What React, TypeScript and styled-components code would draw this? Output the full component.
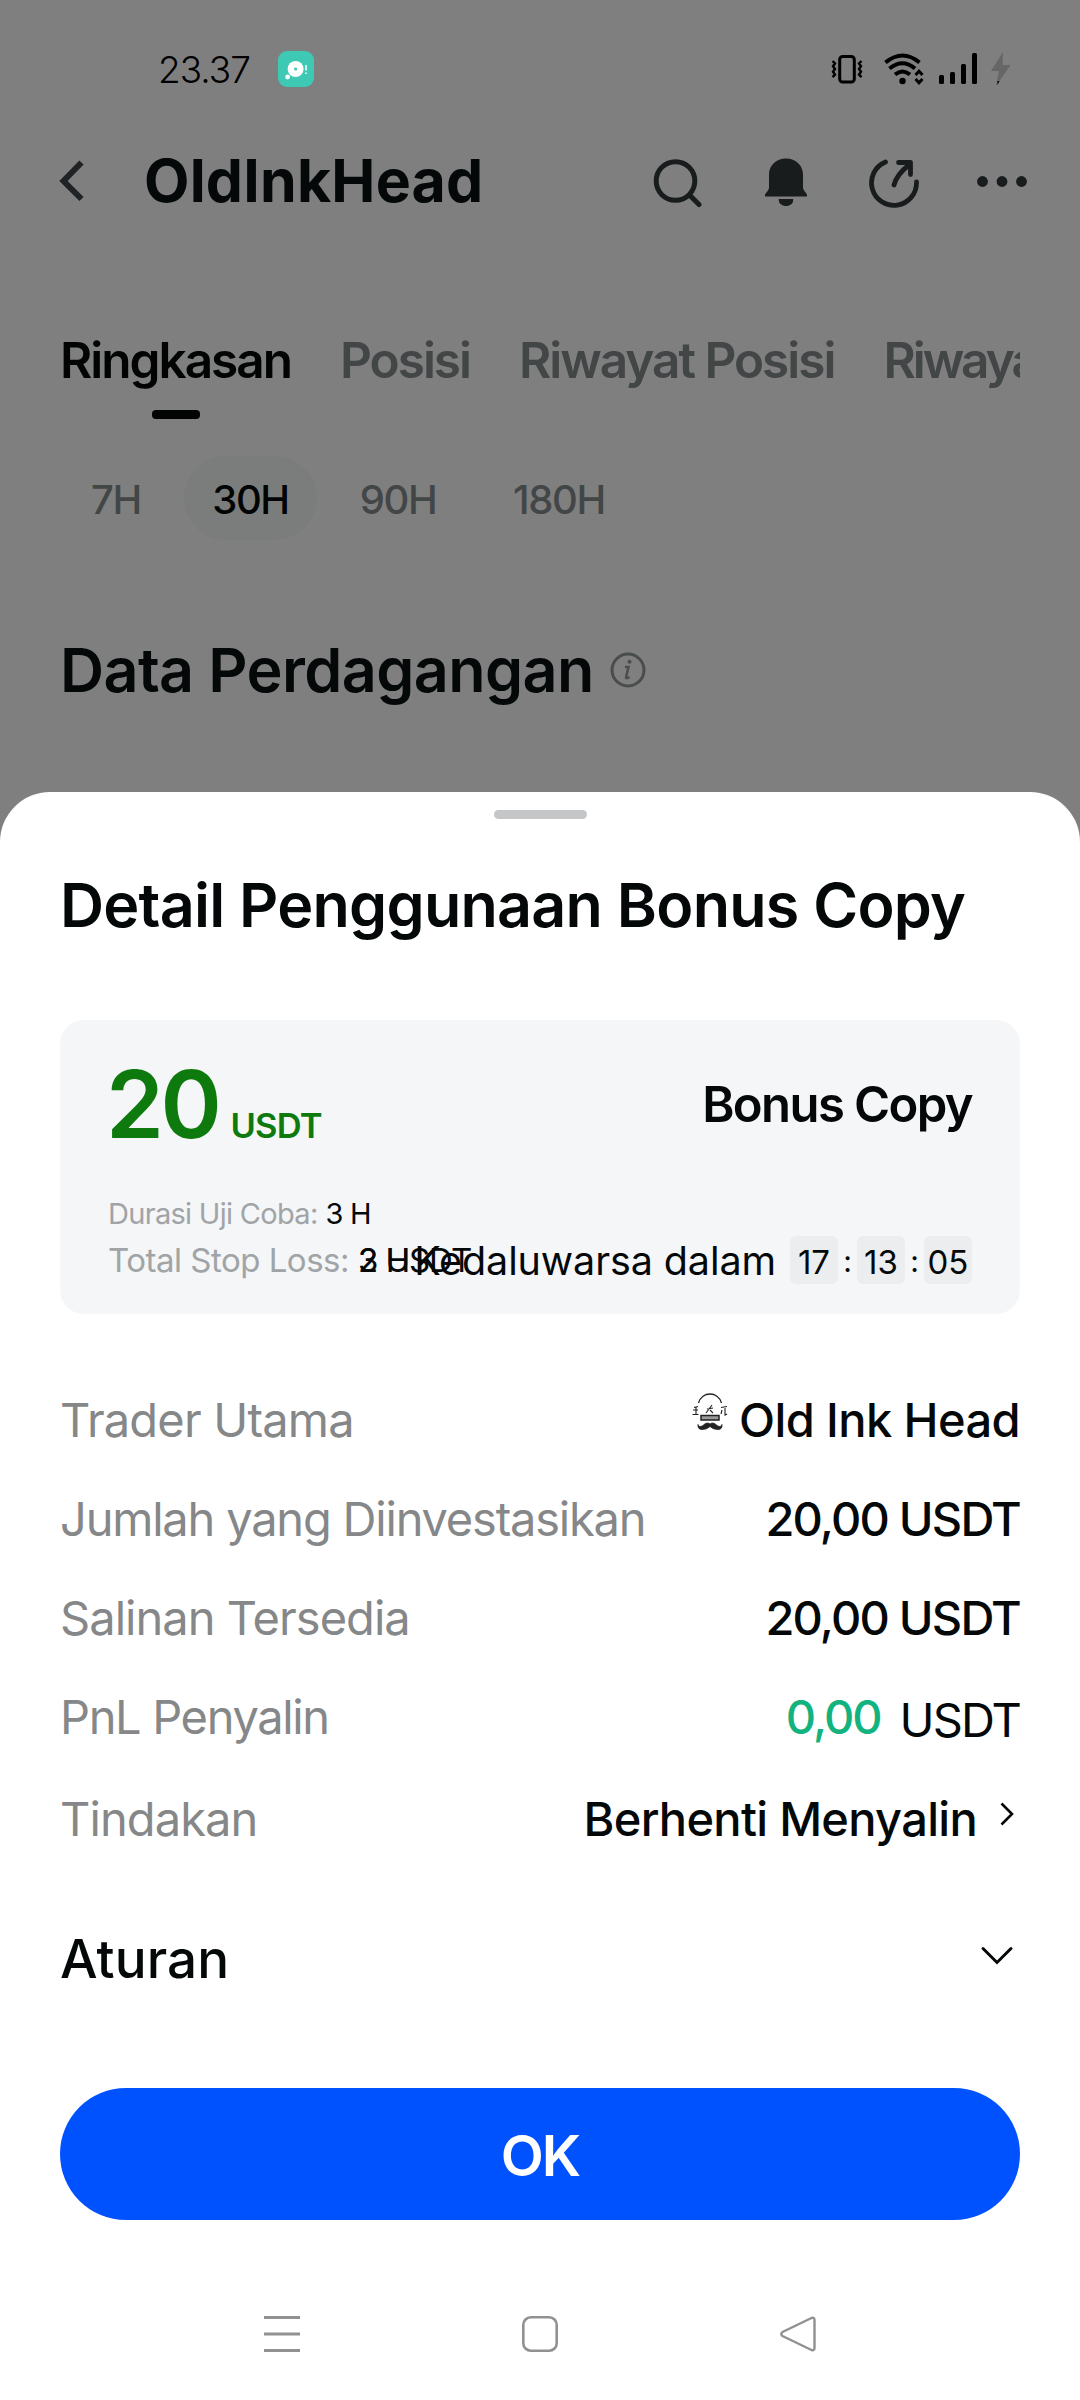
import React from "react";
import styled, { createGlobalStyle } from "styled-components";

const GlobalStyle = createGlobalStyle`
  * { box-sizing: border-box; }
  body { margin: 0; background: #7f7f7f; }
`;

const Screen = styled.main`
  width: 1080px;
  height: 2400px;
  display: flex;
  flex-direction: column;
  overflow: hidden;
  background: #7f7f7f;
  color: #050808;
  font-family: Inter, "Liberation Sans", sans-serif;
  white-space: nowrap;
`;

const Label = styled.span<{ $size: number; $weight?: number; $track?: number; $color?: string }>`
  font-size: ${(p) => p.$size}px;
  font-weight: ${(p) => p.$weight ?? 400};
  letter-spacing: ${(p) => p.$track ?? 0}px;
  color: ${(p) => p.$color ?? "inherit"};
`;

const StatusBar = styled.header`
  height: 138px;
  flex: none;
  display: flex;
  align-items: center;
  padding: 0 69px 0 158px;
  color: #000;
`;

const ChatBadge = styled.svg`
  margin-left: 28px;
`;

const StatusIcons = styled.div`
  margin-left: auto;
  display: flex;
  align-items: center;
`;

const StatusIcon = styled.svg<{ $before?: number }>`
  margin-left: ${(p) => p.$before ?? 0}px;
`;

const AppBar = styled.div`
  height: 86px;
  flex: none;
  display: flex;
  align-items: center;
  padding: 0 53px 0 58px;
`;

const AppTitle = styled.h1`
  margin: 0 0 0 60px;
  line-height: 80px;
  font-size: 59px;
  font-weight: 700;
  letter-spacing: 0.2px;
`;

const Actions = styled.div`
  margin-left: auto;
  display: flex;
  align-items: center;
  gap: 48px;
`;

const Divider = styled.div`
  flex: none;
  height: 1px;
  margin: 23px 90px 0;
  background: #7d7d7d;
`;

const Tabs = styled.nav`
  flex: none;
  display: flex;
  gap: 49px;
  margin: 82px 60px 0;
  overflow: hidden;
`;

const Tab = styled.div<{ $active?: boolean; $track?: number }>`
  flex: none;
  display: flex;
  flex-direction: column;
  align-items: center;
  height: 89px;
  line-height: 60px;
  font-size: 49.5px;
  font-weight: 600;
  letter-spacing: ${(p) => p.$track ?? -2}px;
  color: ${(p) => (p.$active ? "#020404" : "#434646")};
  &::after {
    content: "";
    display: ${(p) => (p.$active ? "block" : "none")};
    width: 48px;
    height: 9px;
    margin-top: 20px;
    border-radius: 4px;
    background: #020404;
  }
`;

const Periods = styled.div`
  flex: none;
  display: flex;
  margin: 37px 60px 0;
`;

const Period = styled.div<{ $w: number; $active?: boolean }>`
  width: ${(p) => p.$w}px;
  height: 84px;
  line-height: 87px;
  border-radius: 42px;
  text-align: center;
  font-size: 40px;
  font-weight: 500;
  letter-spacing: -1.4px;
  color: ${(p) => (p.$active ? "#020404" : "#434646")};
  background: ${(p) => (p.$active ? "#7a7d7c" : "transparent")};
  &:first-child {
    margin-right: 12px;
  }
`;

const SectionHeading = styled.div`
  flex: none;
  display: flex;
  align-items: center;
  gap: 16px;
  height: 80px;
  margin: 90px 60px 82px;
`;

const Heading = styled.h2<{ $track?: number }>`
  margin: 0;
  line-height: 80px;
  font-size: 61px;
  font-weight: 600;
  letter-spacing: ${(p) => p.$track ?? -0.7}px;
`;

const Sheet = styled.section`
  flex: 1;
  display: flex;
  flex-direction: column;
  padding: 18px 60px 0;
  border-radius: 50px 50px 0 0;
  background: #fff;
`;

const Grabber = styled.div`
  flex: none;
  align-self: center;
  width: 93px;
  height: 9px;
  margin-bottom: 46px;
  border-radius: 4.5px;
  background: #c4c6c7;
`;

const BonusCard = styled.div`
  position: relative;
  flex: none;
  height: 294px;
  margin-top: 75px;
  padding: 44px 48px 30px;
  border-radius: 24px;
  background: #f4f6f7;
`;

const CardTop = styled.div`
  display: flex;
  justify-content: space-between;
  height: 80px;
  margin-bottom: 48px;
  line-height: 80px;
`;

const CardName = styled.div`
  display: flex;
  padding-top: 1px;
`;

const Amount = styled.div`
  display: flex;
  align-items: baseline;
  gap: 12px;
  margin-left: -2px;
  color: #0e7a0e;
`;

const Detail = styled.div<{ $h: number; $gap: number }>`
  display: flex;
  gap: ${(p) => p.$gap}px;
  height: ${(p) => p.$h}px;
  line-height: ${(p) => p.$h}px;
`;

const Stacked = styled.span`
  position: relative;
`;

const StackedOver = styled.span`
  position: absolute;
  left: 0;
  top: 0;
`;

const Countdown = styled.div`
  position: absolute;
  right: 48px;
  bottom: 30px;
  display: flex;
  height: 48px;
  line-height: 50px;
`;

const Timer = styled.span`
  display: flex;
  margin-left: 14px;
`;

const TimeBox = styled.span`
  width: 48px;
  height: 48px;
  line-height: 52px;
  border-radius: 6px;
  background: #ebedee;
  text-align: center;
  font-size: 33px;
`;

const Colon = styled.span`
  width: 19px;
  line-height: 50px;
  text-align: center;
  font-size: 30px;
`;

const Rows = styled.div`
  flex: none;
  padding-top: 56px;
`;

const Row = styled.div<{ $h?: number }>`
  display: flex;
  align-items: center;
  justify-content: space-between;
  height: ${(p) => p.$h ?? 99}px;
  line-height: 60px;
`;

const Value = styled.div`
  display: flex;
  align-items: center;
`;

const Lowered = styled.span`
  display: flex;
  padding-top: 6px;
  margin-left: 19px;
`;

const Avatar = styled.svg`
  margin: -16px 10px 0 0;
`;

const RowChevron = styled.svg`
  margin: -10px 5px 0 22px;
`;

const RulesChevron = styled.svg`
  margin: -8px 6px 0 0;
`;

const OkButton = styled.button`
  flex: none;
  height: 132px;
  margin-top: 43px;
  padding: 3px 0 0;
  border: 0;
  border-radius: 66px;
  background: #0052ff;
  color: #fff;
  font-family: inherit;
  font-size: 56px;
  font-weight: 600;
  letter-spacing: -2px;
`;

const NavBar = styled.footer`
  display: flex;
  align-items: center;
  justify-content: center;
  gap: 222px;
  height: 180px;
  padding-top: 47px;
`;

const GRAY = "#858788";
const INK = "#191c1d";

export default function App() {
  return (
    <>
      <GlobalStyle />
      <Screen>
        <StatusBar>
          <Label $size={37} $weight={300} $track={-1}>23.37</Label>
          <ChatBadge width="36" height="36" viewBox="0 0 36 36">
            <rect width="36" height="36" rx="9" fill="#3ec9b5" />
            <circle cx="17.6" cy="18" r="8" fill="#fff" />
            <circle cx="17.6" cy="18" r="1.6" fill="#3ec9b5" />
            <circle cx="9.6" cy="26" r="2.4" fill="#fff" />
            <path d="M28 14v5.5M28 21.6v1.4" stroke="#fff" strokeWidth="1.5" />
          </ChatBadge>
          <StatusIcons>
            <StatusIcon width="32" height="32" viewBox="0 0 32 32" fill="none" stroke="#000">
              <rect x="8.7" y="3.4" width="14.6" height="25.6" rx="3" strokeWidth="3" />
              <path d="M1.5 8l2.5 2.4-2 2.8 2 2.8-2 2.8 2 2.8-2.5 2.6M30.5 8L28 10.4l2 2.8-2 2.8 2 2.8-2 2.8 2.5 2.6" strokeWidth="2.4" />
            </StatusIcon>
            <StatusIcon $before={20} width="42" height="34" viewBox="0 0 42 34" fill="none" stroke="#000" strokeWidth="4">
              <path d="M2.5 10.5Q19.5 -3.5 36.5 10.5M6.5 16.5Q19.5 6 32 16.5M12 22.5Q19.5 16.5 27 22.5" />
              <circle cx="19.5" cy="29" r="3.2" fill="#000" stroke="none" />
              <path d="M32.5 23l3.5-3.7 3.5 3.7M32.5 27l3.5 3.7 3.5-3.7" strokeWidth="3" />
            </StatusIcon>
            <StatusIcon $before={14} width="38" height="32" viewBox="0 0 38 32">
              <rect x="0" y="22" width="5" height="9" rx="1.5" />
              <rect x="11" y="19" width="5" height="12" rx="1.5" />
              <rect x="22" y="11" width="5" height="20" rx="1.5" />
              <rect x="33" y="0" width="5" height="31" rx="1.5" />
            </StatusIcon>
            <StatusIcon $before={14} width="20" height="36" viewBox="0 0 20 36">
              <path d="M12 1L0 20h8L5 35 19.5 14H11.5z" fill="#666" />
              <path d="M6.5 30H8.5L6.500 34z" fill="#000" />
            </StatusIcon>
          </StatusIcons>
        </StatusBar>
        <AppBar>
          <svg width="26" height="42" viewBox="0 0 26 42" fill="none" stroke="#202326" strokeWidth="6">
            <path d="M23.5 2.5L5.5 21l18 18" />
          </svg>
          <AppTitle>OldInkHead</AppTitle>
          <Actions>
            <svg width="56" height="54" viewBox="0 0 56 54" fill="none" stroke={INK} strokeWidth="5" strokeLinecap="round">
              <circle cx="23.5" cy="27" r="19.3" />
              <path d="M38 41.5l9 9" />
            </svg>
            <svg width="60" height="50" viewBox="0 0 60 50" fill={INK}>
              <path d="M30 2.5c10 0 17 7 17 16v13c0 3 4 6 4 7.5v1.500H9V39c0-1.500 4-4.500 4-7.500v-13c0-9 7-16 17-16z" />
              <path d="M22.8 43h14.4v1c0 3.500-3 6-7.200 6s-7.200-2.500-7.200-6z" />
            </svg>
            <svg width="60" height="54" viewBox="0 0 60 54" fill="none" stroke={INK} strokeWidth="4.8" strokeLinecap="round" strokeLinejoin="round">
              <path d="M21.5 8A22.5 22.5 0 1 0 52.5 28" />
              <path d="M30 31Q33 20 45 11M34.5 8.5H46.5V20.5" />
            </svg>
            <svg width="55" height="12" viewBox="-5 0 55 12" fill={INK}>
              <circle cx="5.500" cy="6.500" r="5.400" />
              <circle cx="25" cy="6.500" r="5.400" />
              <circle cx="44.500" cy="6.500" r="5.400" />
            </svg>
          </Actions>
        </AppBar>
        <Divider />
        <Tabs>
          <Tab $active>Ringkasan</Tab>
          <Tab>Posisi</Tab>
          <Tab>Riwayat Posisi</Tab>
          <Tab $track={-3}>Riwayat Copy</Tab>
        </Tabs>
        <Periods>
          <Period $w={112}>7H</Period>
          <Period $w={133} $active>30H</Period>
          <Period $w={162}>90H</Period>
          <Period $w={160}>180H</Period>
        </Periods>
        <SectionHeading>
          <Heading $track={-0.6}>Data Perdagangan</Heading>
          <svg width="36" height="36" viewBox="0 0 36 36" fill="none" stroke="#4a4d4d">
            <circle cx="18" cy="18" r="16" strokeWidth="3" />
            <path d="M15 15h3.5l-2.500 10.500q0 1.500 3.500-.5" strokeWidth="2.5" />
            <circle cx="19.5" cy="9.8" r="2" fill="#4a4d4d" stroke="none" />
          </svg>
        </SectionHeading>
        <Sheet>
          <Grabber />
          <Heading $track={-0.75}>Detail Penggunaan Bonus Copy</Heading>
          <BonusCard>
            <CardTop>
              <Amount>
                <Label $size={93} $weight={600} $track={-3.4}>20</Label>
                <Label $size={34.5} $weight={600} $track={-0.8}>USDT</Label>
              </Amount>
              <CardName>
                <Label $size={49} $weight={600} $track={-1.6}>Bonus Copy</Label>
              </CardName>
            </CardTop>
            <Detail $h={44} $gap={8}>
              <Label $size={29} $track={-0.7} $color="#a1a4a6">Durasi Uji Coba:</Label>
              <Label $size={29} $track={-0.8}>3 H</Label>
            </Detail>
            <Detail $h={48} $gap={9}>
              <Label $size={33} $track={-0.5} $color="#a1a4a6">Total Stop Loss:</Label>
              <Stacked>
                <Label $size={33} $track={-1}>2 USDT</Label>
                <StackedOver>
                  <Label $size={33} $track={-1}>3 H</Label>
                </StackedOver>
              </Stacked>
            </Detail>
            <Countdown>
              <Label $size={39.5} $track={-0.1}>Kedaluwarsa dalam</Label>
              <Timer>
                <TimeBox>17</TimeBox>
                <Colon>:</Colon>
                <TimeBox>13</TimeBox>
                <Colon>:</Colon>
                <TimeBox>05</TimeBox>
              </Timer>
            </Countdown>
          </BonusCard>
          <Rows>
            <Row>
              <Label $size={47} $track={-0.8} $color={GRAY}>Trader Utama</Label>
              <Value>
                <Avatar width="38" height="38" viewBox="0 0 38 38" fill="none" stroke="#222">
                  <path d="M7.500 10C11 -2 27 -2 30.500 10" strokeWidth="1.3" />
                  <path d="M3 14.5l4-1M2 17h5M5 14v7M1.5 21.5h6M30 14.5l6-1M31 17l-1 4M34 15v7l2-1M16 16l6-1M21 12l-6 8M19 17l3 3" strokeWidth="1.1" />
                  <rect x="10" y="22.5" width="18" height="4.5" fill="#999" strokeWidth="1.5" />
                  <path d="M7 31.500Q8 35 12 32.500Q16 28.500 19 31Q22 28.500 26 32.500Q30 35 31 31.500Q31.500 36.500 27 36.500Q22 36.500 19 33.500Q16 36.500 11 36.500Q6.500 36.500 7 31.500Z" fill="#222" strokeWidth="0.8" />
                </Avatar>
                <Label $size={47} $weight={500} $track={-0.6}>Old Ink Head</Label>
              </Value>
            </Row>
            <Row>
              <Label $size={47} $track={-1.2} $color={GRAY}>Jumlah yang Diinvestasikan</Label>
              <Label $size={47} $weight={500} $track={-1.8}>20,00 USDT</Label>
            </Row>
            <Row>
              <Label $size={47} $track={-0.95} $color={GRAY}>Salinan Tersedia</Label>
              <Label $size={47} $weight={500} $track={-1.8}>20,00 USDT</Label>
            </Row>
            <Row>
              <Label $size={47} $track={-1.35} $color={GRAY}>PnL Penyalin</Label>
              <Value>
                <Label $size={47} $weight={500} $track={-2} $color="#12b37e">0,00</Label>
                <Lowered>
                  <Label $size={47} $track={-1.9}>USDT</Label>
                </Lowered>
              </Value>
            </Row>
            <Row $h={106}>
              <Label $size={47} $track={-0.9} $color={GRAY}>Tindakan</Label>
              <Value>
                <Label $size={47} $weight={500} $track={-0.7}>Berhenti Menyalin</Label>
                <RowChevron width="16" height="24" viewBox="0 0 16 24" fill="none" stroke="#050808" strokeWidth="2.6">
                  <path d="M2.5 1.5L13 12 2.5 22.5" />
                </RowChevron>
              </Value>
            </Row>
            <Row $h={173}>
              <Label $size={53} $weight={500} $track={0.1}>Aturan</Label>
              <RulesChevron width="34" height="20" viewBox="0 0 34 20" fill="none" stroke="#050808" strokeWidth="3" strokeLinecap="round">
                <path d="M3 3.5L17 17.5 31 3.5" />
              </RulesChevron>
            </Row>
          </Rows>
          <OkButton>OK</OkButton>
          <NavBar>
            <svg width="36" height="36" viewBox="0 0 36 36" stroke="#919191" strokeWidth="3">
              <path d="M0 1.5h36M0 18h36M0 34.5h36" />
            </svg>
            <svg width="36" height="36" viewBox="0 0 36 36" fill="none" stroke="#919191" strokeWidth="2.6">
              <rect x="1.3" y="1.3" width="33.4" height="33.4" rx="7.5" />
            </svg>
            <svg width="36" height="36" viewBox="0 0 36 36" fill="none" stroke="#919191" strokeWidth="2.4">
              <path d="M31.5 2L2.5 16Q0 18 2.5 20L31.5 34Q34.5 35 34.5 32V4Q34.5 1 31.5 2Z" />
            </svg>
          </NavBar>
        </Sheet>
      </Screen>
    </>
  );
}
